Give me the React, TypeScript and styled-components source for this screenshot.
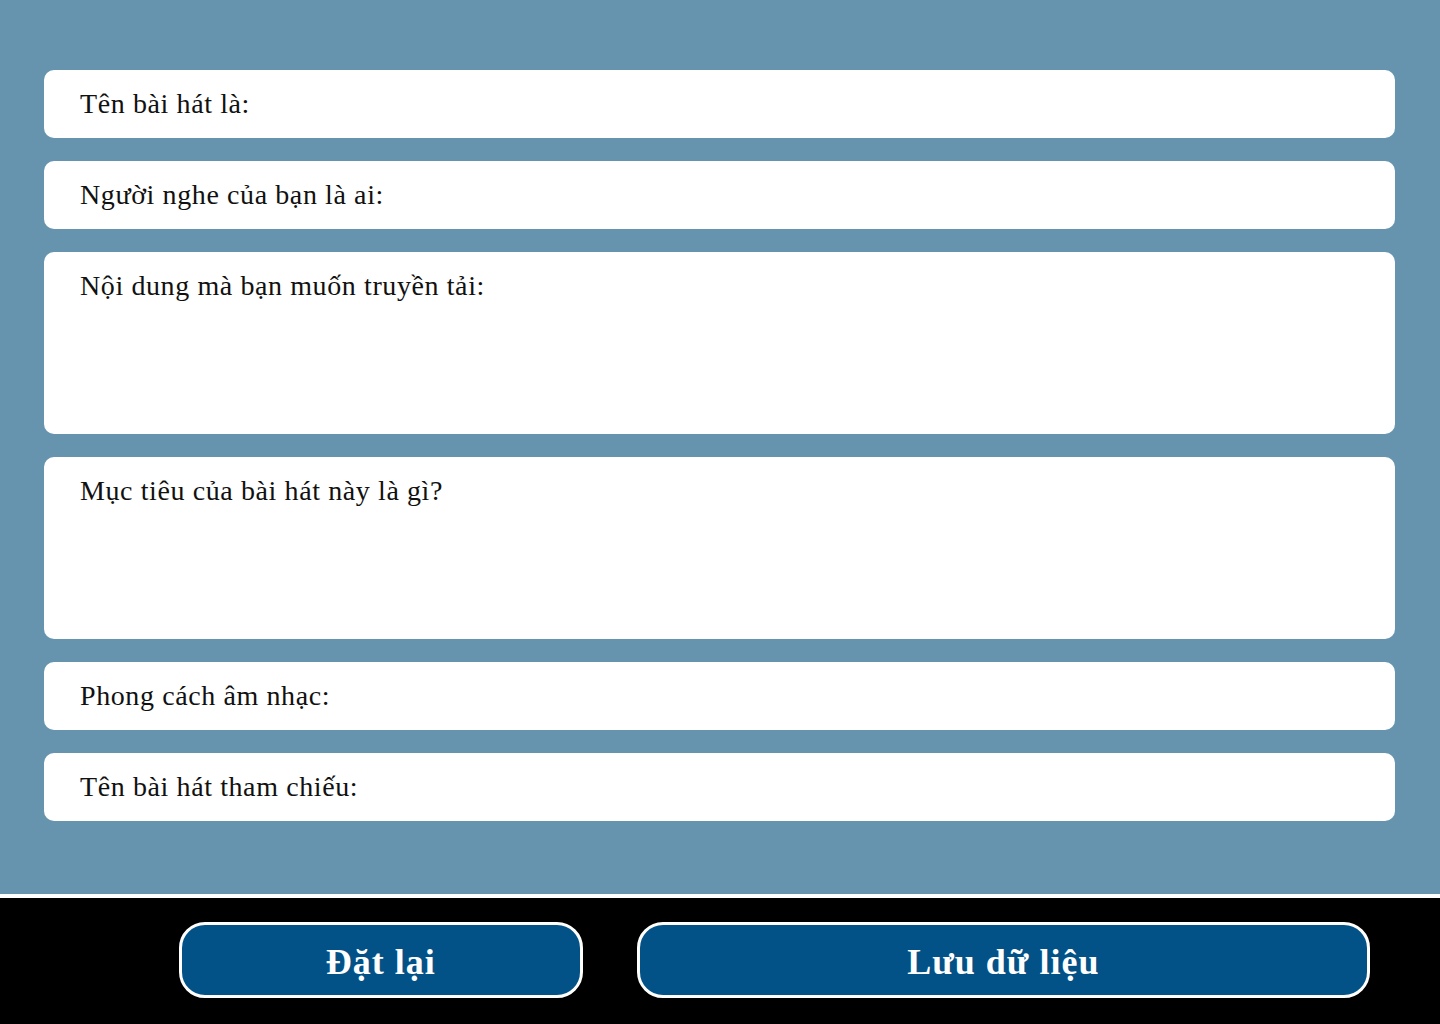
import React, { FC } from 'react'
import styled, { createGlobalStyle } from 'styled-components';

const palette = {
  sky: '#6694af',
  white: '#ffffff',
  black: '#000000',
  navy: '#025288',
  ink: '#111111',
};

const GlobalStyle = createGlobalStyle`
  html, body {
    margin: 0;
    padding: 0;
    background-color: ${palette.black};
  }
  body {
    font-family: "Liberation Serif", "DejaVu Serif", serif;
  }
  * {
    box-sizing: border-box;
  }
`

const Page = styled.div`
  display: flex;
  flex-direction: column;
  width: 1440px;
  height: 1024px;
`
const Form = styled.div`
  background-color: ${palette.sky};
  display: flex;
  flex-direction: column;
  gap: 23px;
  padding: 70px 45px 0 44px;
  height: 898px;
  border-bottom: 4px solid ${palette.white};
`
const Field = styled.div<{ $tall?: boolean }>`
  background-color: ${palette.white};
  border-radius: 10px;
  height: ${p => (p.$tall ? '182px' : '68px')};
  padding: ${p => (p.$tall ? '18px 36px' : '0 36px')};
  display: flex;
  align-items: ${p => (p.$tall ? 'flex-start' : 'center')};
`
const Label = styled.span`
  font-size: 28px;
  letter-spacing: 0.6px;
  color: ${palette.ink};
  line-height: 32px;
`
const Footer = styled.div`
  flex: 1;
  background-color: ${palette.black};
  display: flex;
  align-items: flex-start;
  gap: 54px;
  padding: 24px 70px 0 179px;
`
const Button = styled.button<{ $width: number }>`
  width: ${p => p.$width}px;
  height: 76px;
  background-color: ${palette.navy};
  border: 3px solid ${palette.white};
  border-radius: 26px;
  color: ${palette.white};
  font-family: "Liberation Serif", "DejaVu Serif", serif;
  font-weight: bold;
  font-size: 36px;
  letter-spacing: 1px;
  display: flex;
  justify-content: center;
  align-items: center;
  padding: 4px 0 0;
  cursor: pointer;
`

const fields = [
  { label: 'Tên bài hát là:' },
  { label: 'Người nghe của bạn là ai:' },
  { label: 'Nội dung mà bạn muốn truyền tải:', tall: true },
  { label: 'Mục tiêu của bài hát này là gì?', tall: true },
  { label: 'Phong cách âm nhạc:' },
  { label: 'Tên bài hát tham chiếu:' },
];

const App: FC = () => {
  return (
    <>
      <GlobalStyle />
      <Page>
        <Form>
          {fields.map(f => (
            <Field key={f.label} $tall={f.tall}>
              <Label>{f.label}</Label>
            </Field>
          ))}
        </Form>
        <Footer>
          <Button $width={404}>Đặt lại</Button>
          <Button $width={734}>Lưu dữ liệu</Button>
        </Footer>
      </Page>
    </>
  )
}

export default App
